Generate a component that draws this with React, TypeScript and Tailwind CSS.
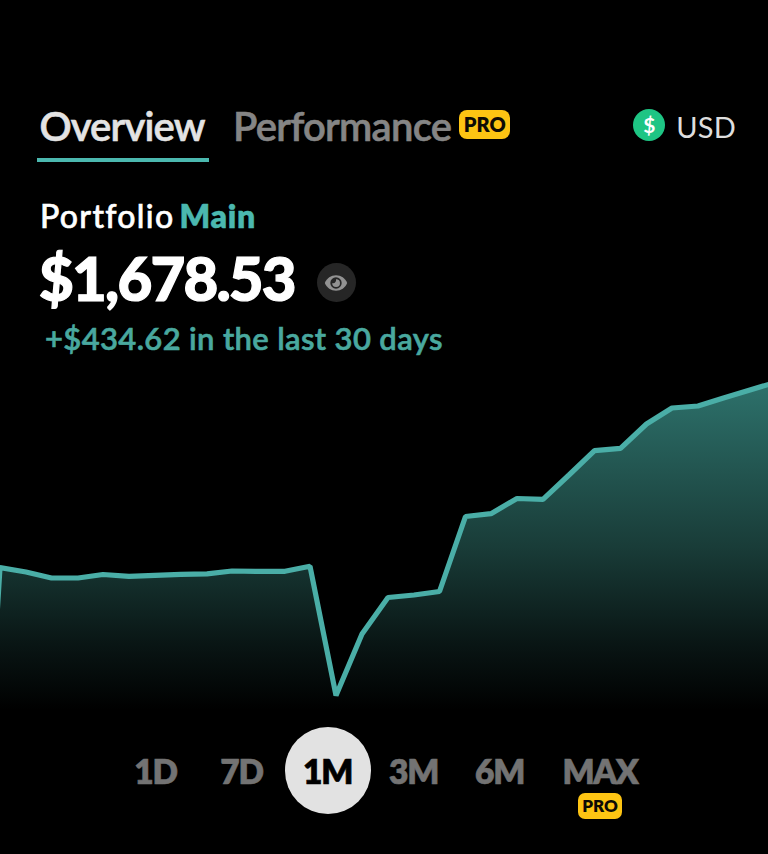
import { useState } from 'react'
import clsx from 'clsx'

type Tab = 'overview' | 'performance'

interface Range {
  id: string
  pro?: boolean
}

const RANGES: Range[] = [
  { id: '1D' },
  { id: '7D' },
  { id: '1M' },
  { id: '3M' },
  { id: '6M' },
  { id: 'MAX', pro: true },
]

const CHART_TOP = 370
const CHART_HEIGHT = 350

// one point per day, in page units
const POINTS: [number, number][] = [
  [-9, 712],
  [0, 567.5],
  [26, 572],
  [51.5, 578],
  [78, 578],
  [103, 574.5],
  [129, 576.3],
  [155, 575.3],
  [181, 574.3],
  [207, 573.8],
  [232, 571],
  [258, 571.4],
  [285, 571.3],
  [310, 566.2],
  [336, 695.5],
  [362, 634],
  [388, 597.5],
  [414, 595],
  [439.5, 591.5],
  [465.5, 516.5],
  [491, 513.7],
  [517, 498.5],
  [543, 499.3],
  [569, 475],
  [594.5, 450.7],
  [620.5, 448.3],
  [646.5, 424],
  [672, 408],
  [698, 406],
  [723.5, 398],
  [770, 384],
]

export default function App() {
  const [tab, setTab] = useState<Tab>('overview')
  const [range, setRange] = useState('1M')
  const [hidden, setHidden] = useState(false)

  return (
    <main className="flex h-[854px] w-[768px] flex-col overflow-hidden bg-black font-['Lato',sans-serif] text-white">
      <header className="flex h-[162px] items-end justify-between pr-8 pl-[37px]">
        <nav className="flex items-end">
          <button
            type="button"
            onClick={() => setTab('overview')}
            className={clsx(
              'h-[60px] w-[172px] border-b-4 pr-0.5 pb-2 text-[40px] leading-[48px] font-semibold tracking-[-0.85px] [-webkit-text-stroke:0.6px_currentColor]',
              tab === 'overview' ? 'border-[#4bb8af] text-[#e3e3e3]' : 'border-transparent text-[#858585]',
            )}
          >
            Overview
          </button>
          <button
            type="button"
            onClick={() => setTab('performance')}
            className={clsx(
              'ml-6 flex h-[60px] items-start border-b-4 border-transparent text-[40px] leading-[48px] font-semibold tracking-[-0.75px]',
              tab === 'performance' ? 'text-[#e3e3e3]' : 'text-[#858585]',
            )}
          >
            <span className="[-webkit-text-stroke:0.6px_currentColor]">Performance</span>
            <span className="mt-2 ml-2">
              <ProBadge size="lg" />
            </span>
          </button>
        </nav>
        <button type="button" className="mb-[18px] flex items-center gap-[11px]">
          <span className="flex size-8 items-center justify-center rounded-full bg-[#1ec584] pb-0.5 text-[21px] leading-none font-bold">
            $
          </span>
          <span className="mt-1 text-[29px] leading-[34px] tracking-[0.2px] text-[#dedede]">USD</span>
        </button>
      </header>

      <section className="h-[208px] pt-[34px] pl-10">
        <h2 className="text-[32px] leading-[40px] font-medium">
          <span className="mr-[5px] tracking-[1.3px] [-webkit-text-stroke:0.6px_currentColor]">Portfolio</span>
          <span className="font-extrabold tracking-[0.7px] text-[#4bb8af] [-webkit-text-stroke:0.4px_currentColor]">
            Main
          </span>
        </h2>
        <div className="flex h-[84px] items-center">
          <p className="-ml-px text-[60px] leading-[84px] font-black tracking-[-1.8px] [-webkit-text-stroke:1.2px_currentColor]">
            {hidden ? '••••••' : '$1,678.53'}
          </p>
          <button
            type="button"
            aria-label="Toggle balance"
            onClick={() => setHidden(!hidden)}
            className="mt-[9px] ml-[22px] flex size-[39px] items-center justify-center rounded-full bg-[#262626]"
          >
            <EyeIcon />
          </button>
        </div>
        <p className="ml-[5px] text-[31px] leading-[36px] font-semibold tracking-[0.35px] text-[#49a89f] [-webkit-text-stroke:0.6px_currentColor]">
          +$434.62 in the last 30 days
        </p>
      </section>

      <Chart />

      <div className="flex pt-[7px] pl-[112.5px]">
        {RANGES.map((r) => (
          <button
            key={r.id}
            type="button"
            onClick={() => setRange(r.id)}
            className={clsx(
              'flex h-[87px] flex-col items-center rounded-full pt-6 text-[33.5px] leading-[41px] font-extrabold tracking-[-1.3px] [-webkit-text-stroke:0.6px_currentColor]',
              r.pro ? 'w-[115px]' : 'w-[86px]',
              range === r.id ? 'bg-[#e2e2e2] text-black' : 'text-[#737373]',
            )}
          >
            {r.id}
            {r.pro && <ProBadge size="sm" />}
          </button>
        ))}
      </div>
    </main>
  )
}

function Chart() {
  const line = POINTS.map(([x, y]) => `${x},${y}`).join(' ')

  return (
    <svg width="768" height={CHART_HEIGHT} viewBox={`0 ${CHART_TOP} 768 ${CHART_HEIGHT}`} className="block shrink-0">
      <defs>
        <linearGradient id="area" gradientUnits="userSpaceOnUse" x1="0" y1="384" x2="0" y2="710">
          <stop offset="0" stopColor="#2d716b" />
          <stop offset="0.5" stopColor="#193c38" />
          <stop offset="0.8" stopColor="#091514" />
          <stop offset="1" stopColor="#000000" />
        </linearGradient>
      </defs>
      <polygon points={`${line} 770,712`} fill="url(#area)" />
      <polyline points={line} fill="none" stroke="#4aaea7" strokeWidth="5.2" strokeLinejoin="bevel" />
    </svg>
  )
}

function ProBadge({ size }: { size: 'sm' | 'lg' }) {
  return (
    <span
      className={clsx(
        'flex items-center justify-center bg-[#fdc413] font-extrabold tracking-normal text-[#0d0b05] [-webkit-text-stroke:0]',
        size === 'lg'
          ? 'h-[29px] w-[51px] rounded-[8px] text-[20px] leading-[29px]'
          : 'mt-px h-[26px] w-[44px] shrink-0 rounded-[7px] text-[17px] leading-[26px]',
      )}
    >
      PRO
    </span>
  )
}

function EyeIcon() {
  return (
    <svg width="24" height="18" viewBox="0 0 24 18">
      <path d="M.8 9C2.8 4.2 7 1.3 12 1.3S21.2 4.2 23.2 9c-2 4.8-6.2 7.7-11.2 7.7S2.8 13.8.8 9Z" fill="#929292" />
      <circle cx="12" cy="9" r="5.7" fill="#262626" />
      <path d="M12 5.2A3.9 3.9 0 1 1 8.2 9c2.2.8 4.4-1.3 3.8-3.8Z" fill="#929292" />
    </svg>
  )
}
